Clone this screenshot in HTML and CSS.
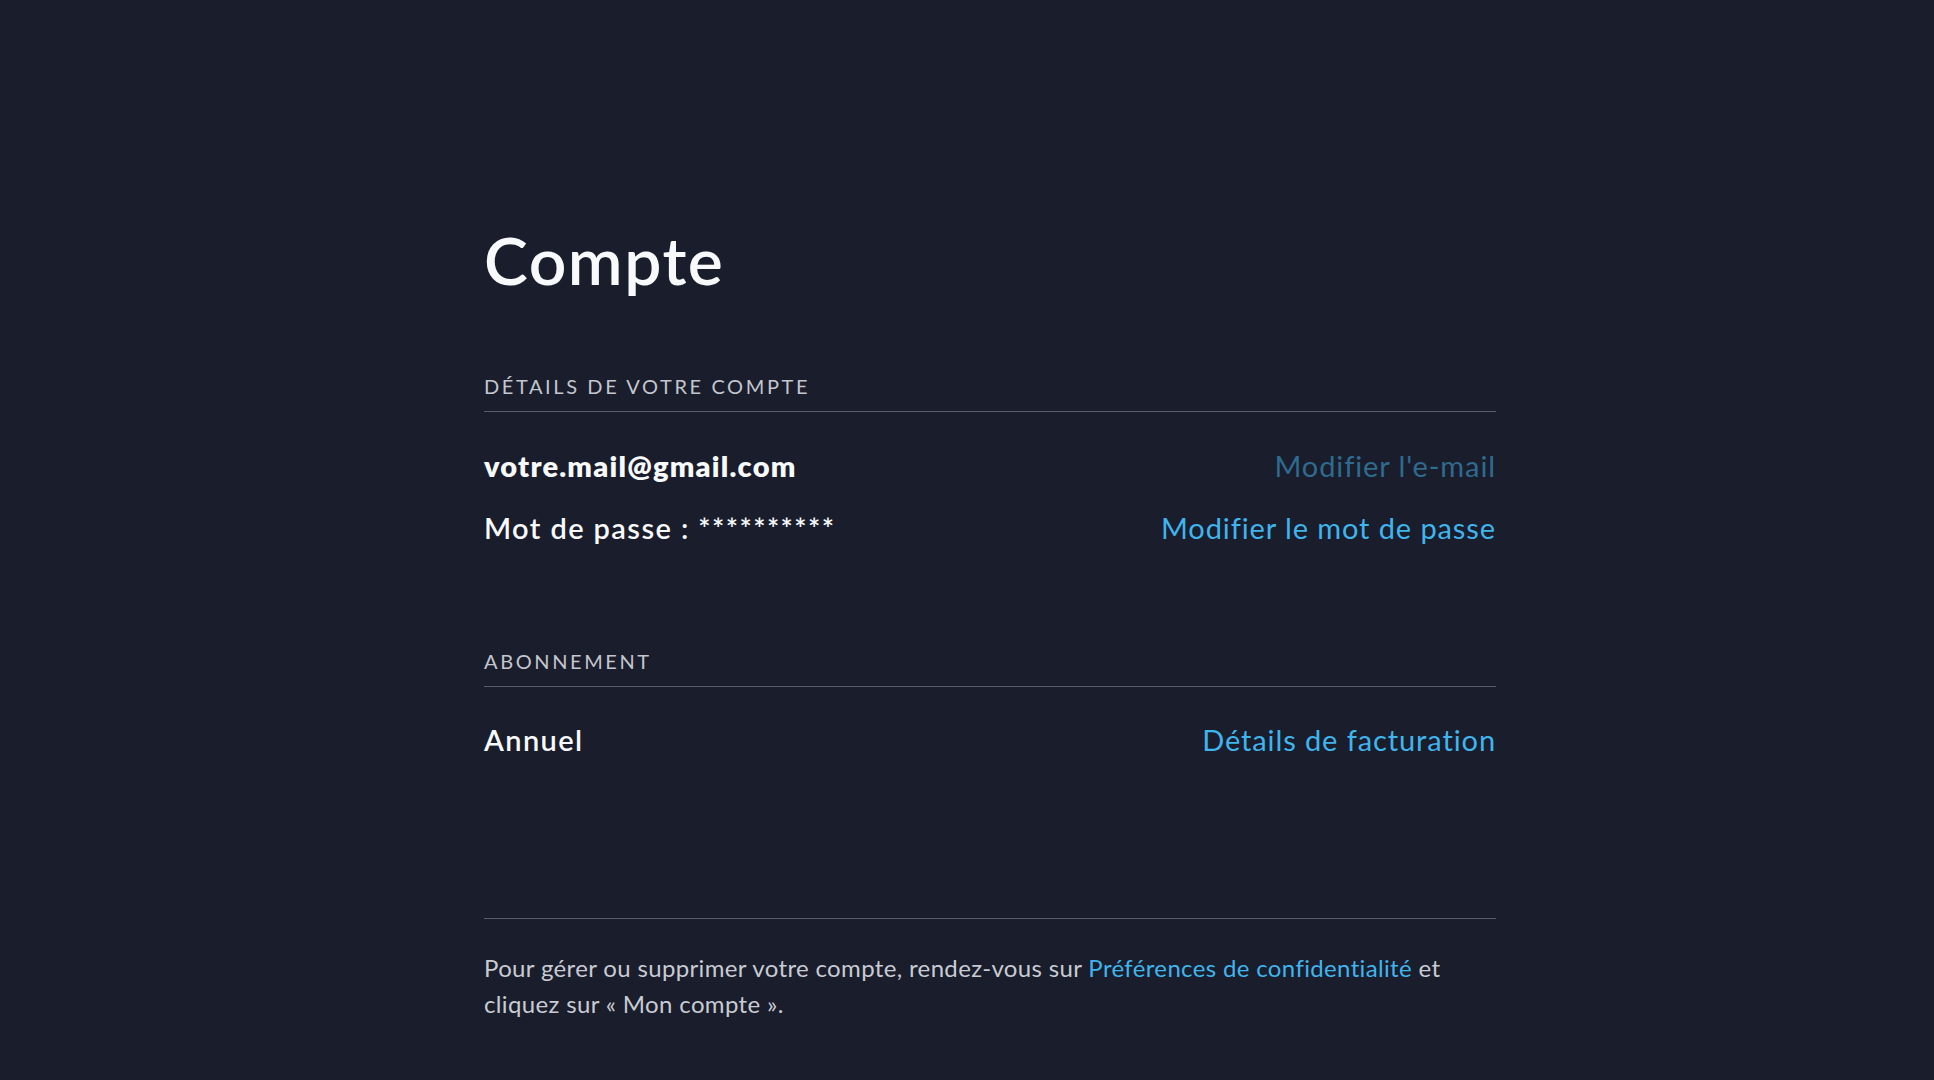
FILE: index.html
```html
<!DOCTYPE html>
<html lang="fr">

<head>
    <meta charset="UTF-8">
    <meta name="viewport" content="width=device-width, initial-scale=1.0">
    <title>Compte</title>
    <link rel="stylesheet" href="styles.css">
</head>

<body>

    <div id="accountPage">
        <h1 class="pageTitle">Compte</h1>

        <section class="accountSection detailsSection">
            <h2 class="sectionLabel">Détails de votre compte</h2>
            <div class="row emailRow">
                <span class="rowValue strong">votre.mail@gmail.com</span>
                <a class="rowLink dim" href="#">Modifier l'e-mail</a>
            </div>
            <div class="row passwordRow">
                <span class="rowValue">Mot de passe : **********</span>
                <a class="rowLink" href="#">Modifier le mot de passe</a>
            </div>
        </section>

        <section class="accountSection planSection">
            <h2 class="sectionLabel">Abonnement</h2>
            <div class="row planRow">
                <span class="rowValue">Annuel</span>
                <a class="rowLink" href="#">Détails de facturation</a>
            </div>
        </section>

        <div id="footerNote">
            <p>Pour gérer ou supprimer votre compte, rendez-vous sur <a href="#">Préférences de confidentialité</a> et<br>cliquez sur « Mon compte ».</p>
        </div>
    </div>

</body>

</html>
```

FILE: styles.css
```css
body {
    margin: 0;
    background: #1a1d2b;
    color: #f7f9fb;
    font-family: Lato, "Noto Sans", sans-serif;
}

a {
    text-decoration: none;
    color: #40b4ec;
}

#accountPage {
    width: 1012px;
    margin-left: 484px;
    padding-top: 220px;
}

.pageTitle {
    margin: 0;
    font-size: 66px;
    line-height: 80px;
    font-weight: 600;
    letter-spacing: 1.5px;
}

.sectionLabel {
    margin: 0;
    padding-bottom: 13px;
    border-bottom: 1px solid #585c6b;
    font-size: 20px;
    line-height: 24px;
    font-weight: 400;
    letter-spacing: 2.6px;
    text-transform: uppercase;
    color: #c3c6ce;
}

.detailsSection {
    margin-top: 74px;
}

.planSection {
    margin-top: 104px;
}

.row {
    display: flex;
    justify-content: space-between;
    align-items: baseline;
    font-size: 29px;
    line-height: 34px;
}

.emailRow {
    margin-top: 37px;
}

.passwordRow {
    margin-top: 28px;
}

.planRow {
    margin-top: 36px;
}

.rowValue {
    font-weight: 600;
    letter-spacing: 1.4px;
}

.rowValue.strong {
    font-weight: 800;
    letter-spacing: 1.2px;
}

.rowLink {
    letter-spacing: 0.9px;
}

.rowLink.dim {
    color: #2f6a8f;
}

#footerNote {
    margin-top: 161px;
    border-top: 1px solid #585c6b;
    padding-top: 31px;
}

#footerNote p {
    margin: 0;
    font-size: 24px;
    line-height: 36px;
    letter-spacing: 0.35px;
    color: #c8cbd3;
}
```
